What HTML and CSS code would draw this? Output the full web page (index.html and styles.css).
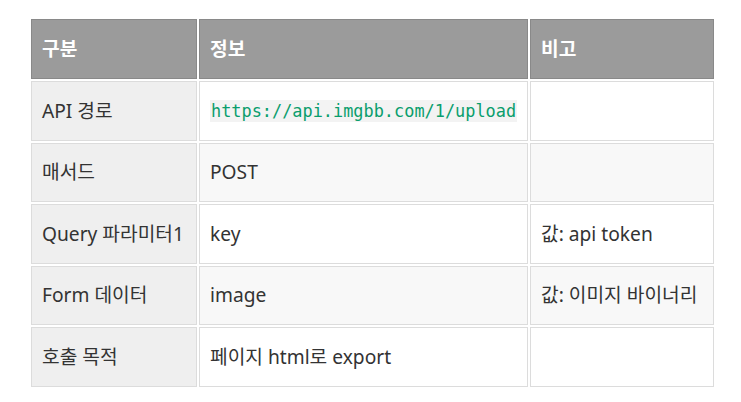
FILE: index.html
```html
<!DOCTYPE html>
<html lang="ko">
<head>
<meta charset="utf-8">
<link rel="stylesheet" href="styles.css">
</head>
<body>
<table class="info-table">
  <colgroup>
    <col class="c1"><col class="c2"><col class="c3">
  </colgroup>
  <thead>
    <tr><th>구분</th><th>정보</th><th>비고</th></tr>
  </thead>
  <tbody>
    <tr><td class="label">API 경로</td><td><code>https://api.imgbb.com/1/upload</code></td><td></td></tr>
    <tr class="alt"><td class="label">매서드</td><td>POST</td><td></td></tr>
    <tr><td class="label">Query 파라미터1</td><td>key</td><td>값: api token</td></tr>
    <tr class="alt"><td class="label">Form 데이터</td><td>image</td><td>값: 이미지 바이너리</td></tr>
    <tr><td class="label">호출 목적</td><td>페이지 html로 export</td><td></td></tr>
  </tbody>
</table>
</body>
</html>
```
FILE: styles.css
```css
html, body {
  margin: 0;
  padding: 0;
  background: #ffffff;
}
body {
  padding: 17px 0 0 29px;
  font-family: "Noto Sans", "Noto Sans CJK KR", sans-serif;
  font-size: 19.2px;
  color: #333333;
}
.info-table {
  border-collapse: separate;
  border-spacing: 2px;
  table-layout: fixed;
  width: 687px;
}
.c1 { width: 166px; }
.c2 { width: 329px; }
.c3 { width: 184px; }
.info-table th {
  background: #9b9b9b;
  border: 1px solid #898989;
  color: #ffffff;
  font-weight: 700;
  text-align: left;
  padding: 15px 10px 15px 10px;
  line-height: 24px;
  height: 28px;
}
.info-table td {
  background: #ffffff;
  border: 1px solid #dcdcdc;
  padding: 15px 10px;
  line-height: 24px;
  height: 27.5px;
  white-space: nowrap;
  overflow: hidden;
}
.info-table tr.alt td {
  background: #f8f8f8;
}
.info-table td.label,
.info-table tr.alt td.label {
  background: #efefef;
}
code {
  font-family: "DejaVu Sans Mono", monospace;
  font-size: 16.9px;
  color: #0a9e6d;
  background: #f3f3f3;
  padding: 1px 1px;
}
```
